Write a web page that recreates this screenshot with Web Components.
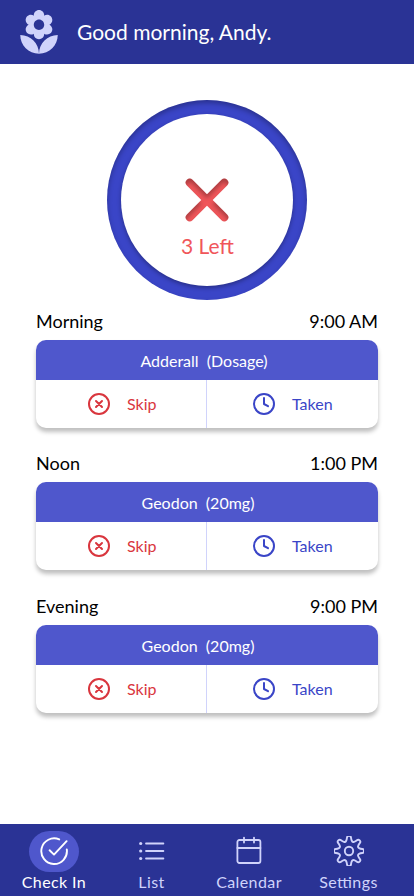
<!DOCTYPE html>
<html lang="en">
<head>
<meta charset="utf-8">
<title>Check In</title>
<style>
html, body { margin: 0; height: 100%; background: #fff; }
body { font-family: Lato, "Liberation Sans", sans-serif; }
</style>
</head>
<body>
<check-in-app></check-in-app>
<script>
const define = (name, html, setup) => {
  const template = document.createElement('template');
  template.innerHTML = html;
  customElements.define(name, class extends HTMLElement {
    connectedCallback() {
      if (this.shadowRoot) return;
      const root = this.attachShadow({ mode: 'open' });
      root.append(template.content.cloneNode(true));
      if (setup) setup(this, root);
    }
  });
};

// Outline of an eight-lobed gear, sampled around the circle.
const gearPath = () => {
  const points = [];
  for (let i = 0; i < 8; i++) {
    const at = (deg, r) => {
      const t = (i * 45 + deg - 90) * Math.PI / 180;
      points.push([15 + r * Math.cos(t), 15 + r * Math.sin(t)]);
    };
    at(-7, 15.2); at(7, 15.2); at(11, 11.6); at(22.5, 9.4); at(34, 11.6);
  }
  const mid = (a, b) => ((a[0] + b[0]) / 2).toFixed(2) + ' ' + ((a[1] + b[1]) / 2).toFixed(2);
  let d = 'M' + mid(points[points.length - 1], points[0]);
  points.forEach((p, i) => {
    d += 'Q' + p[0].toFixed(2) + ' ' + p[1].toFixed(2) + ' ' + mid(p, points[(i + 1) % points.length]);
  });
  return d + 'Z';
};

const icons = {
  check: '<path d="M20.2 3.4A12.8 12.8 0 1 0 27.8 13.4M10.6 14.3L15 18.6L27.6 5.2"/>',
  list: '<g stroke-width="1.8"><path d="M9 7.5H26.4M9 15H26.4M9 22.5H26.4"/></g><g fill="currentColor" stroke="none"><circle cx="3.7" cy="7.5" r="1.6"/><circle cx="3.7" cy="15" r="1.6"/><circle cx="3.7" cy="22.5" r="1.6"/></g>',
  calendar: '<g stroke-width="1.8"><rect x="3.4" y="4" width="23" height="23" rx="2"/><path d="M3.4 12H26.4M10 1.6V6.6M20 1.6V6.6"/></g>',
  gear: '<g stroke-width="1.9"><circle cx="15" cy="15" r="4.2"/><path d="' + gearPath() + '"/></g>'
};

define('app-header', `
<style>
:host { display: flex; align-items: center; height: 64px; flex: none; box-sizing: border-box; padding-left: 14px; background: #2a3395; color: #fff; }
svg { width: 50px; height: 50px; fill: #d0d3fb; margin-top: 1px; }
span { margin-left: 13px; font-size: 21px; line-height: 28px; }
</style>
<svg viewBox="0 0 24 24"><path d="M12 22c4.97 0 9-4.03 9-9-4.97 0-9 4.03-9 9zM5.6 10.25c0 1.38 1.12 2.5 2.5 2.5.53 0 1.01-.16 1.42-.44l-.02.19c0 1.38 1.12 2.5 2.5 2.5s2.5-1.12 2.5-2.5l-.02-.19c.4.28.89.44 1.42.44 1.38 0 2.5-1.12 2.5-2.5 0-1-.59-1.85-1.43-2.25.84-.4 1.43-1.25 1.43-2.25 0-1.38-1.12-2.5-2.5-2.5-.53 0-1.01.16-1.42.44l.02-.19C14.5 2.12 13.38 1 12 1S9.5 2.12 9.5 3.5l.02.19c-.4-.28-.89-.44-1.42-.44-1.38 0-2.5 1.12-2.5 2.5 0 1 .59 1.85 1.43 2.25-.84.4-1.43 1.25-1.43 2.25zM12 5.5c1.38 0 2.5 1.12 2.5 2.5s-1.12 2.5-2.5 2.5S9.5 9.38 9.5 8s1.12-2.5 2.5-2.5zM3 13c0 4.97 4.03 9 9 9 0-4.97-4.03-9-9-9z"/></svg>
<span><slot></slot></span>`);

define('progress-ring', `
<style>
:host { display: grid; width: 200px; height: 200px; margin: 36px auto 0; flex: none; box-sizing: border-box; padding: 14px; border-radius: 50%; background: #3a45c7; box-shadow: inset 0 3px 5px rgba(0,0,0,.28); }
.disc { display: flex; flex-direction: column; align-items: center; border-radius: 50%; background: #fff; box-shadow: 0 2px 4px rgba(0,0,0,.32); box-sizing: border-box; padding-top: 63px; }
svg { width: 46px; height: 46px; }
span { margin-top: 9px; margin-left: 1px; font-size: 21px; line-height: 28px; color: #f0565a; }
</style>
<div class="disc">
<svg viewBox="0 0 46 46"><defs><filter id="inner" filterUnits="userSpaceOnUse" x="-4" y="-4" width="54" height="58" color-interpolation-filters="sRGB">
<feOffset in="SourceAlpha" dy="4" result="o"/><feGaussianBlur in="o" stdDeviation="2" result="b"/>
<feComposite in="SourceAlpha" in2="b" operator="out" result="edge"/>
<feFlood flood-color="#000" flood-opacity=".28"/><feComposite in2="edge" operator="in" result="shade"/>
<feMerge><feMergeNode in="SourceGraphic"/><feMergeNode in="shade"/></feMerge></filter></defs>
<path filter="url(#inner)" d="M5.7 5.7L40.3 40.3M40.3 5.7L5.7 40.3" fill="none" stroke="#f0565a" stroke-width="8" stroke-linecap="round"/></svg>
<span><slot></slot></span></div>`);

define('dose-action', `
<style>
:host { display: flex; align-items: center; flex: none; width: 170px; box-sizing: border-box; padding-left: 51px; color: #d9363e; }
:host([kind=taken]) { width: 172px; color: #3a45c7; padding-left: 45px; border-left: 1px solid #d0d3fb; }
svg { width: 24px; height: 24px; fill: none; stroke: currentColor; stroke-width: 2; stroke-linecap: round; stroke-linejoin: round; }
span { margin-left: 16px; font-size: 16px; line-height: 24px; }
</style>
<svg viewBox="0 0 24 24"><circle cx="12" cy="12" r="10"/><path/></svg><span><slot></slot></span>`,
(el, root) => root.querySelector('path').setAttribute('d',
  el.getAttribute('kind') === 'taken' ? 'M12 6V12L16 14.2' : 'M9 9L15 15M15 9L9 15'));

define('dose-group', `
<style>
:host { display: block; }
.row { display: flex; justify-content: space-between; height: 28px; line-height: 26px; font-size: 18px; color: #000; }
.card { margin-top: 4px; height: 88px; border-radius: 10px; background: #fff; box-shadow: 0 4px 4px rgba(0,0,0,.25); overflow: hidden; }
.name { height: 40px; line-height: 41px; text-align: center; font-size: 16px; color: #fff; background: #4f57cc; white-space: pre; padding-right: var(--name-inset, 6px); }
.actions { display: flex; height: 48px; }
</style>
<div class="row"><slot name="when"></slot><slot name="time"></slot></div>
<div class="card"><div class="name"><slot></slot></div>
<div class="actions"><dose-action kind="skip">Skip</dose-action><dose-action kind="taken">Taken</dose-action></div></div>`);

define('nav-item', `
<style>
:host { display: flex; flex-direction: column; align-items: center; width: 98px; color: #d0d3fb; }
:host([active]) { color: #fff; }
.pill { width: 50px; height: 41px; border-radius: 21px; display: grid; place-items: center; }
:host([active]) .pill { background: #4f57cc; }
svg { width: 30px; height: 30px; margin-bottom: 1px; fill: none; stroke: currentColor; stroke-width: 1.9; stroke-linecap: round; stroke-linejoin: round; }
span { font-size: 16px; line-height: 20px; letter-spacing: .4px; font-feature-settings: "liga" 1; }
</style>
<div class="pill"><svg viewBox="0 0 30 30"></svg></div><span><slot></slot></span>`,
(el, root) => { root.querySelector('svg').innerHTML = icons[el.getAttribute('icon')]; });

define('bottom-nav', `
<style>:host { display: flex; height: 72px; flex: none; margin-top: auto; box-sizing: border-box; padding: 7px 0 0 5px; background: #2a3395; }</style>
<slot></slot>`);

define('check-in-app', `
<style>
:host { display: flex; flex-direction: column; height: 896px; width: 414px; background: #fff; }
main { display: grid; gap: 22px; padding: 8px 36px 0; }
.geodon { --name-inset: 18px; }
.last { margin-top: 1px; }
nav-item[icon=list] { width: 97px; }
nav-item[icon=gear] { width: 101px; }
</style>
<app-header>Good morning, Andy.</app-header>
<progress-ring>3 Left</progress-ring>
<main>
<dose-group><span slot="when">Morning</span><span slot="time">9:00 AM</span>Adderall  (Dosage)</dose-group>
<dose-group class="geodon"><span slot="when">Noon</span><span slot="time">1:00 PM</span>Geodon  (20mg)</dose-group>
<dose-group class="geodon last"><span slot="when">Evening</span><span slot="time">9:00 PM</span>Geodon  (20mg)</dose-group>
</main>
<bottom-nav><nav-item icon="check" active>Check In</nav-item><nav-item icon="list">List</nav-item><nav-item icon="calendar">Calendar</nav-item><nav-item icon="gear">Settings</nav-item></bottom-nav>`);
</script>
</body>
</html>
